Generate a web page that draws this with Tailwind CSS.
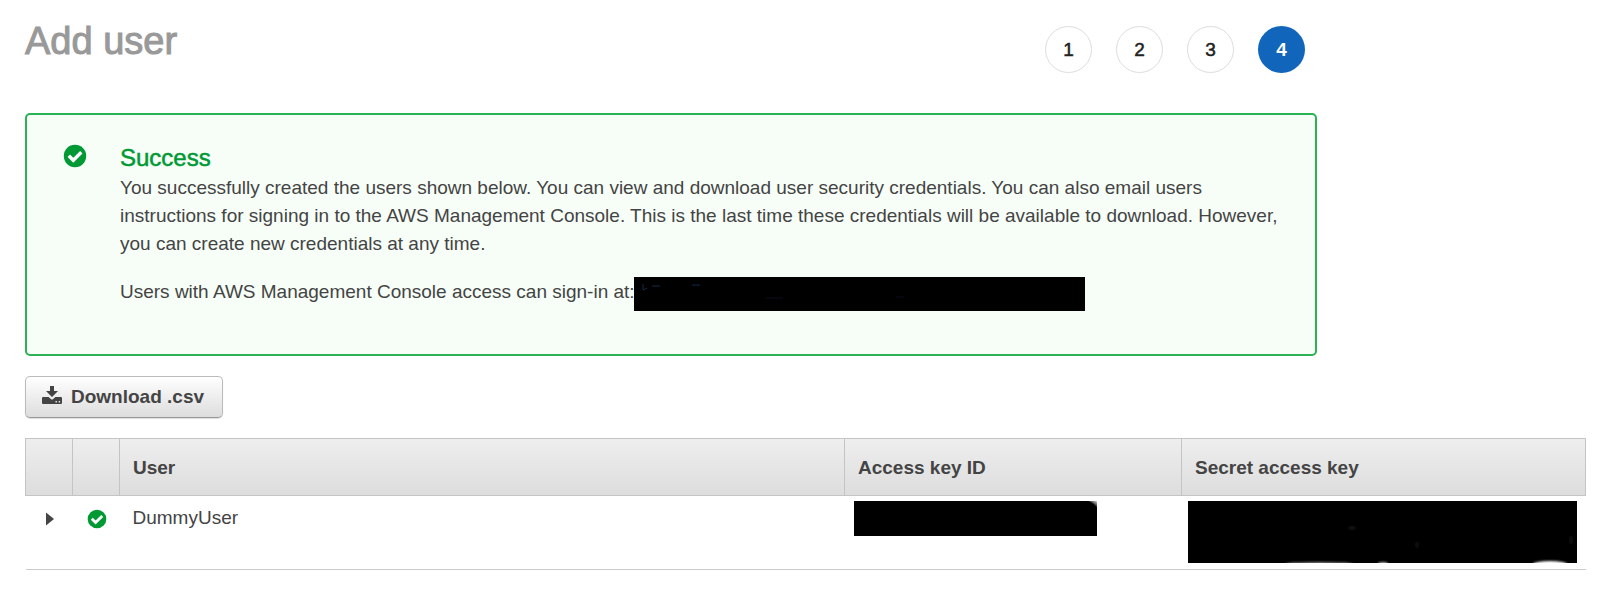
<!DOCTYPE html>
<html lang="en">
<head>
<meta charset="utf-8">
<meta name="viewport" content="width=device-width, initial-scale=1">
<title>Add user</title>
<script src="https://cdn.jsdelivr.net/npm/@tailwindcss/browser@4"></script>
</head>
<body class="bg-white font-['Liberation_Sans',Arial,sans-serif] text-[19px] leading-7 text-[#444]">
<main class="pl-[25px] pr-[14px] pt-[26px] pb-6">
  <div class="max-w-[1292px]">
    <header class="flex items-start justify-between pr-3">
      <h1 class="text-[38px] leading-[30px] text-[#999] [-webkit-text-stroke:1px_#999]">Add user</h1>
      <ol class="flex gap-6 text-center text-[#222]">
        <li class="flex size-[47px] items-center justify-center rounded-full border border-[#ddd] [-webkit-text-stroke:0.5px_#222]">1</li>
        <li class="flex size-[47px] items-center justify-center rounded-full border border-[#ddd] [-webkit-text-stroke:0.5px_#222]">2</li>
        <li class="flex size-[47px] items-center justify-center rounded-full border border-[#ddd] [-webkit-text-stroke:0.5px_#222]">3</li>
        <li class="flex size-[47px] items-center justify-center rounded-full bg-[#1166bb] font-bold text-white" aria-current="step">4</li>
      </ol>
    </header>

    <section class="mt-10 flex gap-[33px] rounded-[5px] border-2 border-[#2bb255] bg-[#f7fef8] pt-[27px] pr-7 pb-[43px] pl-9">
      <svg class="mt-[2px] size-6 shrink-0" viewBox="0 0 24 24" aria-hidden="true">
        <circle cx="12" cy="12" r="11.2" fill="#093"/>
        <path d="M5.8 11.8l4.5 4.5 8-8" fill="none" stroke="#fff" stroke-width="3.4"/>
      </svg>
      <div>
        <h2 class="text-2xl leading-8 text-[#093] [-webkit-text-stroke:0.5px_#093]">Success</h2>
        <p>You successfully created the users shown below. You can view and download user security credentials. You can also email users instructions for signing in to the AWS Management Console. This is the last time these credentials will be available to download. However, you can create new credentials at any time.</p>
        <p class="mt-[15px] flex items-center">Users with AWS Management Console access can sign-in at:
          <svg class="mt-1 -ml-px h-[34px] w-[451px] shrink-0 bg-black" viewBox="0 0 451 34" aria-label="Redacted">
            <path d="M9 7v6l4-2M18 9h8M58 8h8" fill="none" stroke="#142b48" stroke-width="1"/>
            <path d="M132 21h17M262 20h8" fill="none" stroke="#0d0d20" stroke-width="1"/>
          </svg>
        </p>
      </div>
    </section>
  </div>

  <button type="button" class="mt-5 flex h-[42px] items-center gap-[9px] rounded-[5px] border border-[#bbb] border-b-[#999] bg-linear-to-b from-white to-[#ddd] pr-[18px] pl-4 font-bold text-[#444] shadow-[0_1px_1px_#ddd]">
    <svg class="mb-[5px] size-5" viewBox="0 0 20 20" fill="#444" aria-hidden="true">
      <path d="M8 1h4v5h4l-6 6-6-6h4z"/>
      <path fill-rule="evenodd" d="M1 12h5.600l2.200 2q1.200 1 2.400 0l2.200-2H19q1 0 1 1v5q0 1-1 1H1q-1 0-1-1v-5q0-1 1-1zM13.500 16v1.400h1.400V16zM16.700 16v1.400h1.400V16z"/>
    </svg>
    Download .csv
  </button>

  <table class="mt-5 w-full table-fixed border-collapse text-left">
    <colgroup>
      <col class="w-[47px]"><col class="w-[47px]"><col><col class="w-[337px]"><col class="w-[404px]">
    </colgroup>
    <thead>
      <tr class="h-[57px] bg-linear-to-b from-[#eee] to-[#ddd]">
        <th class="border border-[#c4c4c4]" aria-label="Details"></th>
        <th class="border border-[#c4c4c4]" aria-label="Status"></th>
        <th scope="col" class="border border-[#c4c4c4] px-[13px] pt-[2px]">User</th>
        <th scope="col" class="border border-[#c4c4c4] px-[13px] pt-[2px]">Access key ID</th>
        <th scope="col" class="border border-[#c4c4c4] px-[13px] pt-[2px]">Secret access key</th>
      </tr>
    </thead>
    <tbody>
      <tr class="h-[74px] border-b border-[#ccc] align-top">
        <td class="pt-4 pl-[2px]">
          <button type="button" class="mx-auto block" aria-label="Expand DummyUser">
            <svg class="h-[14px] w-2" viewBox="0 0 8 14" aria-hidden="true"><path d="M0 0.500L8 7l-8 6.500z" fill="#444"/></svg>
          </button>
        </td>
        <td class="pt-[13px] pl-[2px]">
          <svg class="mx-auto size-5" viewBox="0 0 24 24" role="img" aria-label="Created">
            <circle cx="12" cy="12" r="11.2" fill="#093"/>
            <path d="M5.800 11.800l4.500 4.500 8-8" fill="none" stroke="#fff" stroke-width="3.400"/>
          </svg>
        </td>
        <td class="px-[13px] pt-2">DummyUser</td>
        <td class="px-[9px] pt-[5px]">
          <svg class="h-[35px] w-[243px] bg-black" viewBox="0 0 243 35" aria-label="Redacted">
            <defs><linearGradient id="corner" x1="1" y1="0" x2="0.500" y2="0.600"><stop offset="0" stop-color="#ddd"/><stop offset="1" stop-color="#000"/></linearGradient></defs>
            <path d="M234 0h9v7q-3-5-9-7z" fill="url(#corner)"/>
          </svg>
        </td>
        <td class="pr-[9px] pl-[6px] pt-[5px]">
          <svg class="h-[62px] w-full bg-black" viewBox="0 0 389 62" preserveAspectRatio="none" aria-label="Redacted">
            <defs><filter id="soft"><feGaussianBlur stdDeviation="1"/></filter></defs>
            <g filter="url(#soft)">
              <ellipse cx="131" cy="63" rx="34" ry="2" fill="#888"/>
              <ellipse cx="195" cy="63" rx="5" ry="2" fill="#bbb"/>
              <ellipse cx="362" cy="63" rx="17" ry="3" fill="#fff"/>
              <ellipse cx="164" cy="27" rx="4" ry="2" fill="#0e1214"/>
              <ellipse cx="229" cy="44" rx="2" ry="3" fill="#0c0c0c"/>
              <ellipse cx="383" cy="39" rx="2" ry="4" fill="#0c0c0c"/>
            </g>
          </svg>
        </td>
      </tr>
    </tbody>
  </table>
</main>
</body>
</html>
